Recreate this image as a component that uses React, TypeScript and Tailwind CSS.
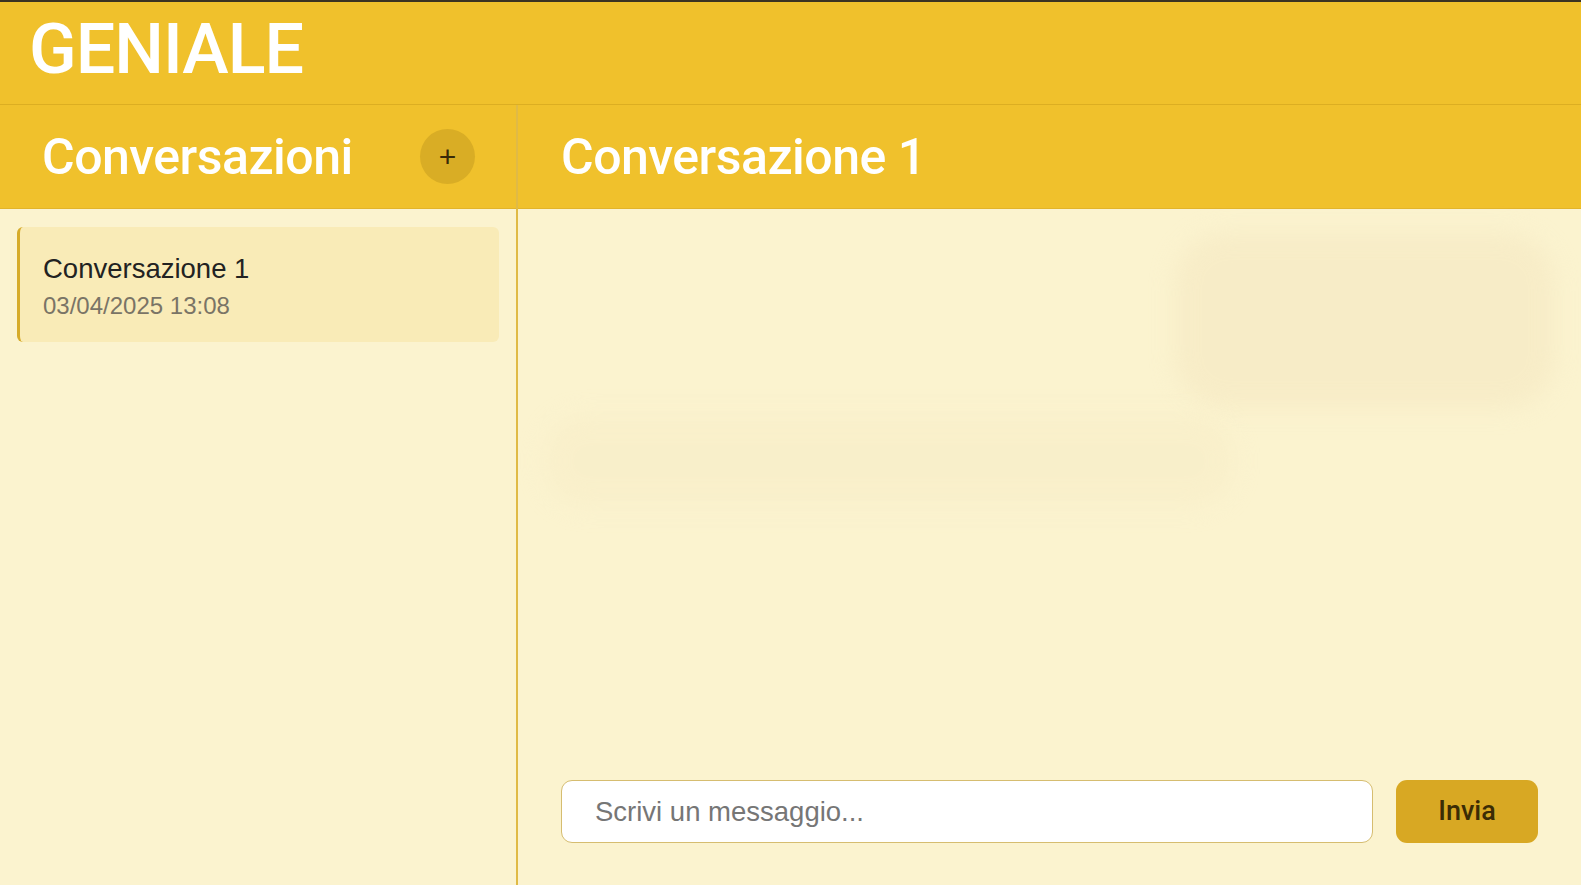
import { useState } from "react";

const conversations = [{ id: 1, title: "Conversazione 1", date: "03/04/2025 13:08" }];

function App() {
  const [message, setMessage] = useState("");
  const [active] = useState(1);

  return (
    <div className="h-screen flex flex-col bg-[#fbf3cf] font-['Liberation_Sans',Arial,sans-serif] overflow-hidden">
      {/* top bar */}
      <header className="h-[105px] shrink-0 bg-[#f0c12c] border-t-2 border-t-[#3b3322] border-b border-b-[#dcae22] flex items-center px-[29px]">
        <h1 className="text-white text-[70px] font-medium tracking-[-1px] font-['Roboto',sans-serif] leading-none pb-[8px]">
          GENIALE
        </h1>
      </header>

      <div className="flex flex-1 min-h-0">
        {/* sidebar */}
        <aside className="w-[518px] shrink-0 border-r-2 border-r-[#e0ba45] flex flex-col">
          <div className="h-[104px] shrink-0 bg-[#f0c12c] border-b border-b-[#e3b42a] flex items-center justify-between pl-[42px] pr-[41px]">
            <h2 className="text-white text-[50px] font-medium font-['Roboto',sans-serif] tracking-[-0.5px] leading-none">
              Conversazioni
            </h2>
            <button className="w-[55px] h-[55px] rounded-full bg-[#d9ad25] flex items-center justify-center text-[#3a2a08] text-[30px] leading-none">
              +
            </button>
          </div>
          <div className="flex-1 px-[17px] pt-[18px] flex flex-col gap-3">
            {conversations.map((c) => (
              <div
                key={c.id}
                className={
                  "h-[115px] rounded-[6px] border-l-[3px] border-l-[#d6ab2a] pl-[23px] pt-[4px] flex flex-col justify-center " +
                  (c.id === active ? "bg-[#f9ebb7]" : "bg-transparent")
                }
              >
                <div className="text-[#222] text-[27.5px] leading-[36px]">{c.title}</div>
                <div className="text-[#7a7466] text-[24px] leading-[32px] mt-[3px]">{c.date}</div>
              </div>
            ))}
          </div>
        </aside>

        {/* chat */}
        <main className="flex-1 flex flex-col min-w-0">
          <div className="h-[104px] shrink-0 bg-[#f0c12c] border-b border-b-[#e3b42a] flex items-center px-[43px]">
            <h2 className="text-white text-[50px] font-medium font-['Roboto',sans-serif] tracking-[-0.5px] leading-none">
              Conversazione 1
            </h2>
          </div>

          <div className="flex-1 flex flex-col pt-[24px] px-[26px] gap-[8px]">
            <div className="self-end w-[380px] h-[175px] rounded-[50px] bg-[#f5e8c2] blur-md opacity-60" />
            <div className="self-start w-[690px] h-[90px] rounded-[40px] bg-[#f7ecc6] blur-md opacity-50" />
          </div>

          <div className="shrink-0 flex items-center gap-[23px] px-[43px] pb-[42px]">
            <input
              value={message}
              onChange={(e) => setMessage(e.target.value)}
              placeholder="Scrivi un messaggio..."
              className="flex-1 h-[63px] rounded-[11px] bg-white border-[1.5px] border-[#d6bd70] px-[33px] text-[27.5px] text-[#333] placeholder:text-[#767676] outline-none"
            />
            <button className="w-[142px] h-[63px] rounded-[11px] bg-[#d8a823] text-[#3b2c05] text-[27px] font-medium font-['Roboto',sans-serif]">
              Invia
            </button>
          </div>
        </main>
      </div>
    </div>
  );
}

export default App;
